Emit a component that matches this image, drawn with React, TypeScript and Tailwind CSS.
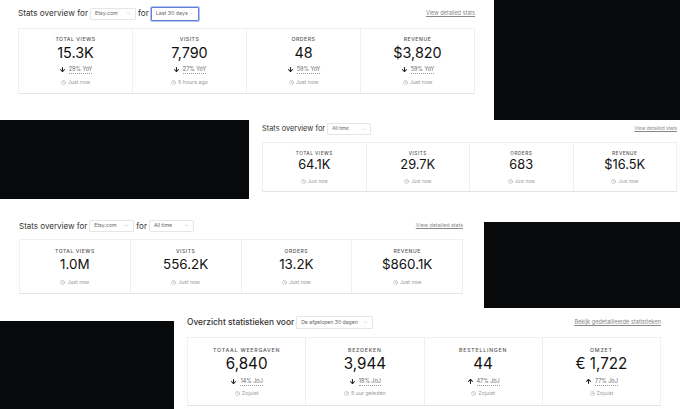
import { ArrowDown, ArrowUp, ChevronDown, Clock } from 'lucide-react';

interface Stat {
  label: string;
  value: string;
  change?: string;
  up?: boolean;
  time: string;
}

interface Sizes {
  title: string;
  select: string;
  selectText: string;
  link: string;
  label: string;
  value: string;
  change: string;
  time: string;
  card: string;
  icon: number;
}

const s1: Sizes = {
  title: 'text-[8.2px]',
  select: 'h-[12px] px-1',
  selectText: 'text-[5.3px]',
  link: 'text-[5.5px]',
  label: 'text-[5.2px] tracking-[0.5px]',
  value: 'text-[14.4px] leading-[20px]',
  change: 'text-[5.5px] mt-[2px]',
  time: 'text-[5.3px] mt-[5px]',
  card: 'h-[64px] pt-[7px]',
  icon: 7,
};

const s2: Sizes = {
  ...s1,
  title: 'text-[7.4px]',
  select: 'h-[12px] px-1',
  selectText: 'text-[4.8px]',
  link: 'text-[4.8px]',
  label: 'text-[4.7px] tracking-[0.5px]',
  value: 'text-[12.8px] leading-[16px]',
  time: 'text-[4.7px] mt-[5px]',
  card: 'h-[48px] pt-[7px]',
};

const s3: Sizes = {
  ...s1,
  title: 'text-[8px]',
  select: 'h-[12px] px-1',
  selectText: 'text-[5.2px]',
  link: 'text-[5.3px]',
  label: 'text-[5.1px] tracking-[0.5px]',
  value: 'text-[13.4px] leading-[19px]',
  time: 'text-[5.1px] mt-[5px]',
  card: 'h-[53px] pt-[8px]',
};

const s4: Sizes = {
  title: 'text-[8.4px] font-medium',
  select: 'h-[13px] px-1',
  selectText: 'text-[5.1px]',
  link: 'text-[5.6px]',
  label: 'text-[5.2px] tracking-[0.8px]',
  value: 'text-[15.2px] leading-[20px]',
  change: 'text-[5.5px] mt-[3px]',
  time: 'text-[5.3px] mt-[4px]',
  card: 'h-[67px] pt-[9px]',
  icon: 7,
};

function Select({ text, width, sizes, focused }: { text: string; width: string; sizes: Sizes; focused?: boolean }) {
  return (
    <div
      className={`${width} ${sizes.select} flex items-center justify-between rounded-[1px] bg-white text-[#666] ${
        focused ? 'border border-[#5f7fd8] ring-1 ring-[#b3c6f3]' : 'border border-[#e6e6e4]'
      }`}
    >
      <span className={`${sizes.selectText} whitespace-nowrap`}>{text}</span>
      <ChevronDown size={5} className="text-[#aaa]" />
    </div>
  );
}

function StatCell({ stat, sizes }: { stat: Stat; sizes: Sizes }) {
  const Arrow = stat.up ? ArrowUp : ArrowDown;
  return (
    <div className={`flex-1 flex flex-col items-center border-l border-[#f0f0ee] first:border-l-0 ${sizes.card}`}>
      <div className={`${sizes.label} uppercase font-medium text-[#555] leading-[7px]`}>{stat.label}</div>
      <div className={`${sizes.value} text-[#111]`}>{stat.value}</div>
      {stat.change && (
        <div className={`${sizes.change} flex items-center gap-[3px] leading-[8px] text-[#666]`}>
          <Arrow size={sizes.icon} strokeWidth={3.5} className="text-[#222]" />
          <span className="border-b border-dotted border-[#999]">{stat.change}</span>
        </div>
      )}
      <div className={`${sizes.time} flex items-center gap-[2px] leading-[7px] text-[#999]`}>
        <Clock size={5} />
        <span>{stat.time}</span>
      </div>
    </div>
  );
}

function Panel({
  stats,
  sizes,
  linkText,
  headerClass,
  children,
}: {
  stats: Stat[];
  sizes: Sizes;
  linkText: string;
  headerClass: string;
  children: React.ReactNode;
}) {
  return (
    <div className="flex-1 min-w-0">
      <div className={`flex items-center justify-between ${headerClass}`}>
        <div className="flex items-center gap-[2px] text-[#333]">{children}</div>
        <span className={`${sizes.link} text-[#888] underline whitespace-nowrap`}>{linkText}</span>
      </div>
      <div className="flex rounded-[1px] border border-[#f0f0ee] border-b-[#e4e4e2] bg-white">
        {stats.map((stat) => (
          <StatCell key={stat.label} stat={stat} sizes={sizes} />
        ))}
      </div>
    </div>
  );
}

const row1: Stat[] = [
  { label: 'Total views', value: '15.3K', change: '29% YoY', time: 'Just now' },
  { label: 'Visits', value: '7,790', change: '27% YoY', time: '5 hours ago' },
  { label: 'Orders', value: '48', change: '59% YoY', time: 'Just now' },
  { label: 'Revenue', value: '$3,820', change: '59% YoY', time: 'Just now' },
];

const row2: Stat[] = [
  { label: 'Total views', value: '64.1K', time: 'Just now' },
  { label: 'Visits', value: '29.7K', time: 'Just now' },
  { label: 'Orders', value: '683', time: 'Just now' },
  { label: 'Revenue', value: '$16.5K', time: 'Just now' },
];

const row3: Stat[] = [
  { label: 'Total views', value: '1.0M', time: 'Just now' },
  { label: 'Visits', value: '556.2K', time: 'Just now' },
  { label: 'Orders', value: '13.2K', time: 'Just now' },
  { label: 'Revenue', value: '$860.1K', time: 'Just now' },
];

const row4: Stat[] = [
  { label: 'Totaal weergaven', value: '6,840', change: '14% JoJ', time: 'Zojuist' },
  { label: 'Bezoeken', value: '3,944', change: '18% JoJ', time: '5 uur geleden' },
  { label: 'Bestellingen', value: '44', change: '47% JoJ', up: true, time: 'Zojuist' },
  { label: 'Omzet', value: '€ 1,722', change: '77% JoJ', up: true, time: 'Zojuist' },
];

export default function App() {
  return (
    <div className="w-[680px] h-[409px] overflow-hidden bg-white font-['Inter',sans-serif]">
      <div className="flex h-[120px]">
        <div className="flex-1 pl-[18px] pr-[19px] pt-[7px]">
          <Panel stats={row1} sizes={s1} linkText="View detailed stats" headerClass="h-[13px] mb-[8px]">
            <span className={s1.title}>Stats overview for</span>
            <Select text="Etsy.com" width="w-[46px]" sizes={s1} />
            <span className={s1.title}>for</span>
            <Select text="Last 30 days" width="w-[48px] h-[14px]" sizes={s1} focused />
          </Panel>
        </div>
        <div className="w-[186px] bg-[#08090b]" />
      </div>

      <div className="flex h-[85px]">
        <div className="w-[249px] h-[79px] bg-[#08090b]" />
        <div className="flex-1 pl-[13px] pr-[3px] pt-[3px]">
          <Panel stats={row2} sizes={s2} linkText="View detailed stats" headerClass="h-[12px] mb-[7px]">
            <span className={s2.title}>Stats overview for</span>
            <Select text="All time" width="w-[44px]" sizes={s2} />
          </Panel>
        </div>
      </div>

      <div className="flex h-[111px]">
        <div className="flex-1 pl-[19px] pr-[21px] pt-[14px]">
          <Panel stats={row3} sizes={s3} linkText="View detailed stats" headerClass="h-[13px] mb-[7px]">
            <span className={s3.title}>Stats overview for</span>
            <Select text="Etsy.com" width="w-[45px]" sizes={s3} />
            <span className={s3.title}>for</span>
            <Select text="All time" width="w-[45px]" sizes={s3} />
          </Panel>
        </div>
        <div className="w-[196px] h-[86px] mt-[17px] bg-[#08090b]" />
      </div>

      <div className="flex h-[93px]">
        <div className="w-[174px] h-[88px] mt-[5px] bg-[#08090b]" />
        <div className="flex-1 pl-[13px] pr-[19px]">
          <Panel stats={row4} sizes={s4} linkText="Bekijk gedetailleerde statistieken" headerClass="h-[13px] mb-[8px]">
            <span className={s4.title}>Overzicht statistieken voor</span>
            <Select text="De afgelopen 30 dagen" width="w-[77px]" sizes={s4} />
          </Panel>
        </div>
      </div>
    </div>
  );
}
